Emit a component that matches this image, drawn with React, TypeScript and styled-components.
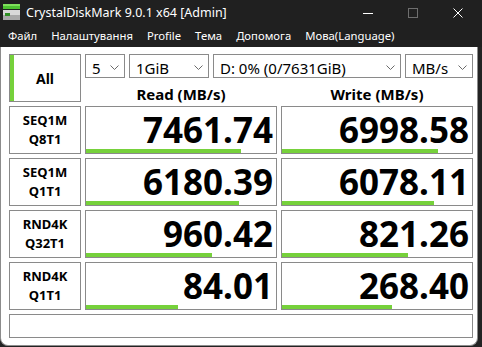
import React from 'react';
import styled, { createGlobalStyle } from 'styled-components';

interface ResultRow {
  name: string;
  params: string;
  read: string;
  write: string;
  readBar: number;
  writeBar: number;
}

const rows: ResultRow[] = [
  { name: 'SEQ1M', params: 'Q8T1', read: '7461.74', write: '6998.58', readBar: 155, writeBar: 156 },
  { name: 'SEQ1M', params: 'Q1T1', read: '6180.39', write: '6078.11', readBar: 153, writeBar: 152 },
  { name: 'RND4K', params: 'Q32T1', read: '960.42', write: '821.26', readBar: 126, writeBar: 126 },
  { name: 'RND4K', params: 'Q1T1', read: '84.01', write: '268.40', readBar: 92, writeBar: 110 },
];

const menuItems = ['Файл', 'Налаштування', 'Profile', 'Тема', 'Допомога', 'Мова(Language)'];

const Chevron: React.FC = () => (
  <svg width="9" height="5" viewBox="0 0 9 5">
    <polyline points="0.5,0.5 4.5,4.5 8.5,0.5" fill="none" stroke="#6a6a6a" strokeWidth="1" />
  </svg>
);

const AppIcon: React.FC = () => (
  <svg width="17" height="16" viewBox="0 0 17 16">
    <rect x="0" y="0" width="17" height="5" fill="#4ec232" />
    <rect x="0" y="0" width="17" height="2" fill="#7fe05c" />
    <rect x="0" y="6" width="17" height="10" fill="#d9d9d9" />
    <rect x="0" y="11" width="17" height="5" fill="#a9a9a9" />
    <rect x="2" y="9" width="5" height="3" fill="#2f8f24" />
  </svg>
);

const App: React.FC = () => {
  return (
    <>
      <GlobalStyle />
      <Window>
        <TitleBar>
          <IconSlot>
            <AppIcon />
          </IconSlot>
          <Title>CrystalDiskMark 9.0.1 x64 [Admin]</Title>
          <Controls>
            <ControlButton>
              <svg width="10" height="10" viewBox="0 0 10 10">
                <line x1="0" y1="5.5" x2="10" y2="5.5" stroke="#fff" strokeWidth="1" />
              </svg>
            </ControlButton>
            <ControlButton>
              <svg width="10" height="10" viewBox="0 0 10 10">
                <rect x="0.5" y="0.5" width="9" height="9" fill="none" stroke="#6e6e6e" strokeWidth="1" />
              </svg>
            </ControlButton>
            <ControlButton>
              <svg width="10" height="10" viewBox="0 0 10 10">
                <path d="M0.5 0.5 L9.5 9.5 M9.5 0.5 L0.5 9.5" stroke="#fff" strokeWidth="1" />
              </svg>
            </ControlButton>
          </Controls>
        </TitleBar>

        <MenuBar>
          {menuItems.map((m) => (
            <MenuItem key={m}>{m}</MenuItem>
          ))}
        </MenuBar>

        <Body>
          <Board>
            <AllButton>All</AllButton>
            <TopPanel>
              <Selectors>
                <Select $width={40}>
                  <span>5</span>
                  <Chevron />
                </Select>
                <Select $width={80}>
                  <span>1GiB</span>
                  <Chevron />
                </Select>
                <Select $width={188}>
                  <span>D: 0% (0/7631GiB)</span>
                  <Chevron />
                </Select>
                <Select $width={68}>
                  <span>MB/s</span>
                  <Chevron />
                </Select>
              </Selectors>
              <Headers>
                <Header>Read (MB/s)</Header>
                <Header>Write (MB/s)</Header>
              </Headers>
            </TopPanel>

            {rows.map((r, i) => (
              <React.Fragment key={i}>
                <TestLabel>
                  <span>{r.name}</span>
                  <span>{r.params}</span>
                </TestLabel>
                <ResultCell>
                  <Value>{r.read}</Value>
                  <Bar style={{ width: r.readBar }} />
                </ResultCell>
                <ResultCell>
                  <Value>{r.write}</Value>
                  <Bar style={{ width: r.writeBar }} />
                </ResultCell>
              </React.Fragment>
            ))}

            <Comment />
          </Board>
        </Body>
      </Window>
    </>
  );
};

export default App;

// Styles
const GlobalStyle = createGlobalStyle`
  html, body {
    margin: 0;
    padding: 0;
    background: #232323;
  }
  body {
    width: 482px;
    height: 347px;
    overflow: hidden;
    font-family: "Noto Sans", "Open Sans", sans-serif;
  }
  * {
    box-sizing: border-box;
  }
`;

const Window = styled.div`
  width: 482px;
  height: 346px;
  display: flex;
  flex-direction: column;
`;

const TitleBar = styled.div`
  height: 25px;
  display: flex;
  align-items: center;
  background: #202020;
  color: #fff;
`;

const IconSlot = styled.div`
  display: flex;
  margin-left: 3px;
  margin-top: -1px;
`;

const Title = styled.div`
  margin-left: 6px;
  font-size: 12.5px;
  line-height: 25px;
  flex: 1;
`;

const Controls = styled.div`
  display: flex;
  height: 100%;
  padding-right: 2px;
`;

const ControlButton = styled.div`
  width: 45px;
  display: flex;
  align-items: center;
  justify-content: center;
`;

const MenuBar = styled.div`
  height: 22px;
  display: flex;
  align-items: center;
  gap: 14px;
  padding-left: 8px;
  background: #202020;
  color: #fff;
  font-size: 11.3px;
`;

const MenuItem = styled.span`
  line-height: 22px;
`;

const Body = styled.div`
  flex: 1;
  width: 478px;
  background: #fff;
  border: 1px solid #8c8c8c;
  border-top: none;
  border-radius: 0 0 8px 8px;
  padding: 7px 4px 0 8px;
`;

const Board = styled.div`
  display: grid;
  grid-template-columns: 72px 192px 192px;
  grid-template-rows: repeat(5, 48px) 24px;
  gap: 4px;
`;

const Box = styled.div`
  border: 1px solid #8a8a8a;
  background: #fff;
`;

const AllButton = styled(Box)`
  display: flex;
  align-items: center;
  justify-content: center;
  box-shadow: inset 4px 0 0 #76d13b;
  font-weight: 700;
  font-size: 14px;
  color: #000;
`;

const TopPanel = styled.div`
  grid-column: 2 / 4;
  display: flex;
  flex-direction: column;
`;

const Selectors = styled.div`
  display: flex;
  gap: 4px;
  height: 24px;
`;

const Select = styled(Box)<{ $width: number }>`
  width: ${(p) => p.$width}px;
  display: flex;
  justify-content: space-between;
  padding: 3px 5px 0 6px;
  font-size: 15px;
  line-height: 20px;
  color: #000;
  svg {
    margin-top: 7px;
    flex-shrink: 0;
  }
`;

const Headers = styled.div`
  display: flex;
  gap: 4px;
  flex: 1;
`;

const Header = styled.div`
  width: 192px;
  text-align: center;
  font-weight: 700;
  font-size: 15px;
  line-height: 15px;
  padding-top: 9px;
  color: #000;
`;

const TestLabel = styled(Box)`
  display: flex;
  flex-direction: column;
  align-items: center;
  justify-content: center;
  font-weight: 700;
  font-size: 13px;
  line-height: 19px;
  color: #000;
`;

const ResultCell = styled(Box)`
  display: flex;
  flex-direction: column;
`;

const Value = styled.div`
  flex: 1;
  text-align: right;
  padding: 5px 3px 0 0;
  font-weight: 700;
  font-size: 35px;
  line-height: 1;
  color: #000;
`;

const Bar = styled.div`
  height: 4px;
  background: #76d13b;
`;

const Comment = styled(Box)`
  grid-column: 1 / 4;
`;
